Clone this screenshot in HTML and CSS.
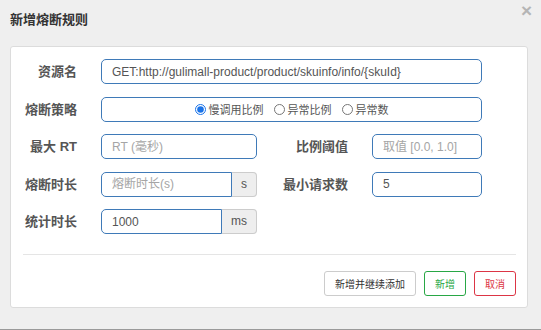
FILE: index.html
```html
<!DOCTYPE html>
<html lang="zh-CN">
    <head>
        <meta charset="UTF-8">
        <title>新增熔断规则</title>
        <link rel="stylesheet" href="styles.css">
    </head>
    <body>
        <div class="dialog">
            <div class="dialog-header">
                <h4 class="dialog-title">新增熔断规则</h4>
                <span class="close">×</span>
            </div>
            <div class="dialog-body">
                <div class="rule-form">
                    <label class="form-label">资源名</label>
                    <div class="field span-3">
                        <input type="text" class="form-input" value="GET:http://gulimall-product/product/skuinfo/info/{skuId}">
                    </div>

                    <label class="form-label">熔断策略</label>
                    <div class="field span-3">
                        <div class="radio-box">
                            <label class="radio"><input type="radio" name="strategy" checked>慢调用比例</label>
                            <label class="radio"><input type="radio" name="strategy">异常比例</label>
                            <label class="radio"><input type="radio" name="strategy">异常数</label>
                        </div>
                    </div>

                    <label class="form-label">最大 RT</label>
                    <div class="field">
                        <input type="text" class="form-input" placeholder="RT (毫秒)">
                    </div>
                    <label class="form-label">比例阈值</label>
                    <div class="field">
                        <input type="text" class="form-input" placeholder="取值 [0.0, 1.0]">
                    </div>

                    <label class="form-label">熔断时长</label>
                    <div class="field input-group">
                        <input type="text" class="form-input" placeholder="熔断时长(s)">
                        <span class="addon">s</span>
                    </div>
                    <label class="form-label">最小请求数</label>
                    <div class="field">
                        <input type="text" class="form-input" value="5">
                    </div>

                    <label class="form-label">统计时长</label>
                    <div class="field input-group">
                        <input type="text" class="form-input" value="1000">
                        <span class="addon addon-wide">ms</span>
                    </div>
                </div>

                <hr class="divider">

                <div class="actions">
                    <button class="btn btn-default">新增并继续添加</button>
                    <button class="btn btn-success">新增</button>
                    <button class="btn btn-danger">取消</button>
                </div>
            </div>
        </div>
    </body>
</html>
```

FILE: styles.css
```css
body {
    margin: 0;
    height: 330px;
    box-sizing: border-box;
    background: #efefef;
    border-bottom: 1px solid #9a9a9a;
    font-family: 'Liberation Sans', 'Noto Sans CJK SC', sans-serif;
    color: #333;
    overflow: hidden;
}
.dialog {
    padding: 0 13px 0 10px;
}
.dialog-header {
    position: relative;
    height: 46px;
}
.dialog-title {
    margin: 0;
    padding-top: 12px;
    font-size: 13px;
    line-height: 16px;
    font-weight: bold;
    color: #333;
}
.close {
    position: absolute;
    top: 1px;
    right: -4px;
    font-size: 19px;
    font-weight: bold;
    color: #b5b5b5;
    line-height: 20px;
}
.dialog-body {
    background: #fff;
    border: 1px solid #dcdcdc;
    border-radius: 3px;
    height: 262px;
    box-sizing: border-box;
    padding-top: 12px;
}
.rule-form {
    display: grid;
    grid-template-columns: 66px 156px 67px 110px;
    grid-auto-rows: 25px;
    column-gap: 24px;
    row-gap: 12.5px;
}
.form-label {
    text-align: right;
    font-size: 13px;
    font-weight: bold;
    color: #555;
    line-height: 25px;
}
.field {
    display: flex;
}
.span-3 {
    grid-column: span 3;
}
.form-input {
    flex: 1;
    min-width: 0;
    height: 25px;
    box-sizing: border-box;
    border: 1px solid #3f7ab8;
    border-radius: 5px;
    padding: 0 10px;
    font-family: inherit;
    font-size: 12px;
    color: #555;
    outline: none;
}
.form-input::placeholder {
    color: #a5a5a5;
}
.input-group .form-input {
    border-top-right-radius: 0;
    border-bottom-right-radius: 0;
}
.addon {
    width: 25px;
    box-sizing: border-box;
    background: #eee;
    border: 1px solid #ccc;
    border-left: none;
    border-radius: 0 4px 4px 0;
    text-align: center;
    font-size: 12px;
    line-height: 23px;
    color: #555;
}
.addon-wide {
    width: 35px;
}
.radio-box {
    flex: 1;
    display: flex;
    justify-content: center;
    align-items: center;
    gap: 10px;
    border: 1px solid #3f7ab8;
    border-radius: 5px;
    font-size: 11px;
    color: #555;
}
.radio {
    display: flex;
    align-items: center;
}
.radio input {
    width: 11px;
    height: 11px;
    margin: 0 3px 0 0;
    accent-color: #1a73e8;
}
.divider {
    margin: 20px 11px 16px 12px;
    border: none;
    border-top: 1px solid #e5e5e5;
}
.actions {
    display: flex;
    justify-content: flex-end;
    gap: 8px;
    padding-right: 11px;
}
.btn {
    height: 25px;
    padding: 0 10px;
    background: #fff;
    border: 1px solid #ccc;
    border-radius: 3px;
    font-family: inherit;
    font-size: 10px;
    cursor: pointer;
}
.btn-default {
    color: #333;
}
.btn-success {
    border-color: #28a745;
    color: #28a745;
}
.btn-danger {
    border-color: #dc3545;
    color: #dc3545;
}
```
